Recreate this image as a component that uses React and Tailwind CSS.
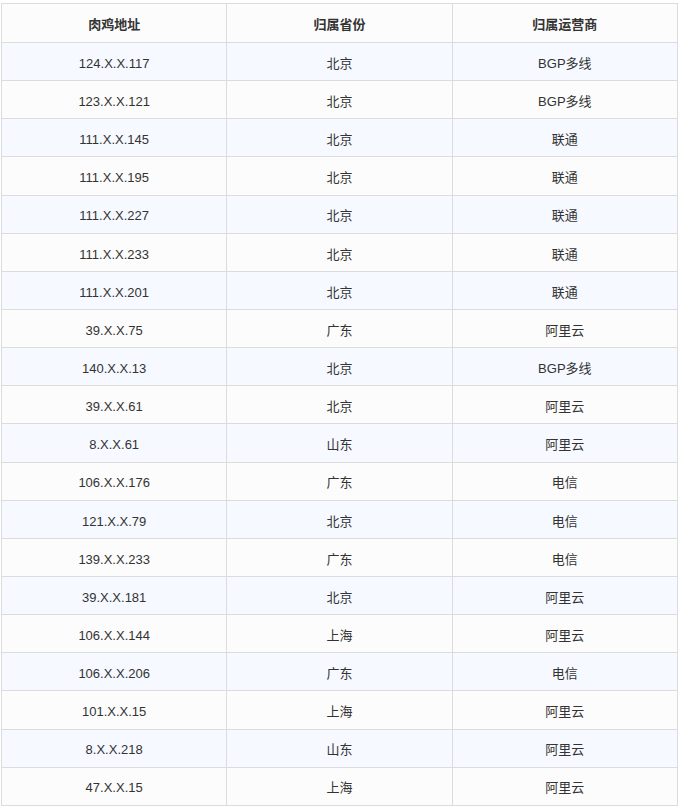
const rows = [
  ["124.X.X.117", "北京", "BGP多线"],
  ["123.X.X.121", "北京", "BGP多线"],
  ["111.X.X.145", "北京", "联通"],
  ["111.X.X.195", "北京", "联通"],
  ["111.X.X.227", "北京", "联通"],
  ["111.X.X.233", "北京", "联通"],
  ["111.X.X.201", "北京", "联通"],
  ["39.X.X.75", "广东", "阿里云"],
  ["140.X.X.13", "北京", "BGP多线"],
  ["39.X.X.61", "北京", "阿里云"],
  ["8.X.X.61", "山东", "阿里云"],
  ["106.X.X.176", "广东", "电信"],
  ["121.X.X.79", "北京", "电信"],
  ["139.X.X.233", "广东", "电信"],
  ["39.X.X.181", "北京", "阿里云"],
  ["106.X.X.144", "上海", "阿里云"],
  ["106.X.X.206", "广东", "电信"],
  ["101.X.X.15", "上海", "阿里云"],
  ["8.X.X.218", "山东", "阿里云"],
  ["47.X.X.15", "上海", "阿里云"],
];

export default function App() {
  return (
    <div className="min-h-[808px] bg-white pl-px pt-[3px] font-['Liberation_Sans','Noto_Sans_CJK_SC',sans-serif] text-[13px] text-[#333]">
      <table className="w-[677px] table-fixed border-collapse">
        <thead>
          <tr className="h-[39px] bg-[#fcfcfc]">
            <th className="border border-[#dcdcdc] p-0 pt-1 font-bold">肉鸡地址</th>
            <th className="border border-[#dcdcdc] p-0 pt-1 font-bold">归属省份</th>
            <th className="border border-[#dcdcdc] p-0 pt-1 font-bold">归属运营商</th>
          </tr>
        </thead>
        <tbody>
          {rows.map((r, i) => (
            <tr key={i} className={`h-[38.15px] ${i % 2 === 0 ? "bg-[#f6f9ff]" : "bg-[#fcfcfc]"}`}>
              {r.map((c, j) => (
                <td key={j} className="border border-[#dcdcdc] p-0 pt-1 text-center">{c}</td>
              ))}
            </tr>
          ))}
        </tbody>
      </table>
    </div>
  );
}
